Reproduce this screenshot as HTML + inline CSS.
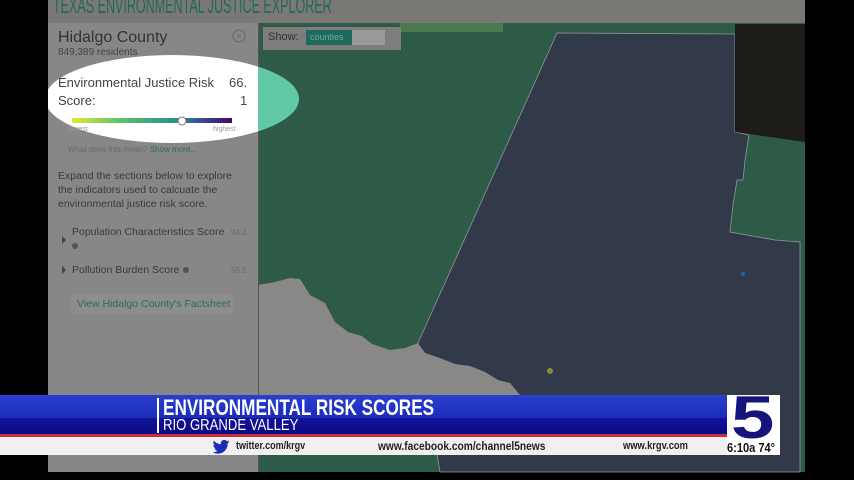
<!DOCTYPE html>
<html><head><meta charset="utf-8"><style>
*{margin:0;padding:0;box-sizing:border-box}
body{width:854px;height:480px;background:#000;position:relative;overflow:hidden;font-family:"Liberation Sans",sans-serif}
.abs{position:absolute}
.t{color:#3e3e3e;font-size:11px;white-space:nowrap}
</style></head><body>
<svg class="abs" style="left:0;top:0" width="854" height="480">
<rect x="48" y="0" width="757" height="472" fill="#2e5a48"/>
<rect x="48" y="0" width="757" height="23" fill="#7a7874"/>
<rect x="400" y="23" width="103" height="9" fill="#4c7a4e"/>
<polygon points="557,33 735,34 735,132 749,135 745,160 743,180 737,180 733,205 730,232 775,240 800,242 800,472 440,472 418,343" fill="#323a4a" stroke="#8c9a96" stroke-width="0.8"/>
<polygon points="735,24 805,24 805,142 735,132" fill="#1e1c18"/>
<polygon points="258,285 275,282 290,278 300,279 310,295 325,303 335,322 348,332 362,336 372,344 390,350 405,348 418,343 425,353 440,358 455,364 470,366 485,372 498,380 510,383 520,395 258,395" fill="#8a8886"/>
<rect x="48" y="23" width="210" height="449" fill="#878787"/>
<line x1="258.5" y1="23" x2="258.5" y2="472" stroke="#555" stroke-width="1"/>
<defs><clipPath id="cl"><rect x="48" y="0" width="210" height="480"/></clipPath><clipPath id="cr"><rect x="258" y="0" width="200" height="480"/></clipPath>
<linearGradient id="g" x1="0" x2="1"><stop offset="0" stop-color="#e4e73a"/><stop offset="0.3" stop-color="#5ec36a"/><stop offset="0.65" stop-color="#2a8f8a"/><stop offset="0.8" stop-color="#3a4f95"/><stop offset="1" stop-color="#440a68"/></linearGradient></defs>
<ellipse cx="172" cy="99" rx="127" ry="44" fill="#fff" clip-path="url(#cl)"/>
<ellipse cx="172" cy="99" rx="127" ry="44" fill="#62c9a6" clip-path="url(#cr)"/>
<rect x="72" y="118" width="160" height="5" fill="url(#g)"/>
<circle cx="182" cy="121" r="4" fill="#fff" stroke="#777"/>
<circle cx="239" cy="36" r="6" fill="none" stroke="#666" stroke-width="1"/>
<text x="239" y="39" font-size="9" fill="#666" text-anchor="middle">×</text>
<rect x="263" y="27" width="138" height="23" fill="#7d7d7d"/>
<rect x="306" y="30" width="46" height="15" fill="#1f6a5c"/>
<rect x="352" y="30" width="33" height="15" fill="#9a9a9a"/>
<circle cx="743" cy="274" r="2" fill="#2060b0"/>
<circle cx="550" cy="371" r="3" fill="#8c8a3a"/>
<path d="M62 236 l4 4 l-4 4z M62 266 l4 4 l-4 4z" fill="#444"/>
<circle cx="75" cy="246" r="3" fill="#555"/><circle cx="186" cy="270" r="3" fill="#555"/>
</svg>
<div class="abs" style="left:53px;top:-7px;font-size:22px;color:#1e6a5a;transform:scaleX(0.57);transform-origin:left;white-space:nowrap">TEXAS ENVIRONMENTAL JUSTICE EXPLORER</div>
<div class="abs t" style="left:58px;top:29px;font-size:16px;color:#333">Hidalgo County</div>
<div class="abs t" style="left:58px;top:47px;font-size:10px;color:#444">849,389 residents</div>
<div class="abs t" style="left:58px;top:75px;font-size:13px;color:#444">Environmental Justice Risk</div>
<div class="abs t" style="left:58px;top:93px;font-size:13px;color:#444">Score:</div>
<div class="abs t" style="left:229px;top:75px;font-size:13px;color:#444">66.</div>
<div class="abs t" style="left:240px;top:93px;font-size:13px;color:#444">1</div>
<div class="abs t" style="left:68px;top:126px;font-size:7px;color:#999">lowest</div>
<div class="abs t" style="left:213px;top:126px;font-size:7px;color:#999">highest</div>
<div class="abs t" style="left:68px;top:145px;font-size:8px;color:#6a6a6a">What does this mean? <span style="color:#2a6a60">Show more...</span></div>
<div class="abs t" style="left:58px;top:169px;font-size:10.5px;line-height:14px;color:#3a3a3a">Expand the sections below to explore<br>the indicators used to calcuate the<br>environmental justice risk score.</div>
<div class="abs t" style="left:72px;top:226px;font-size:10.5px;color:#3a3a3a">Population Characteristics Score</div>
<div class="abs t" style="left:231px;top:228px;font-size:8px;color:#6a6a6a">94.3</div>
<div class="abs t" style="left:72px;top:264px;font-size:10.5px;color:#3a3a3a">Pollution Burden Score</div>
<div class="abs t" style="left:231px;top:266px;font-size:8px;color:#6a6a6a">59.5</div>
<div class="abs" style="left:70px;top:294px;width:164px;height:20px;background:#8d8d8d"></div>
<div class="abs t" style="left:77px;top:298px;font-size:10.5px;color:#2c6a5e">View Hidalgo County's Factsheet</div>
<div class="abs t" style="left:268px;top:31px;font-size:11px;color:#333">Show:</div>
<div class="abs t" style="left:310px;top:32px;font-size:9px;color:#6aa">counties</div>
<!-- banner -->
<div class="abs" style="left:0;top:395px;width:727px;height:23px;background:linear-gradient(#2a3fd0,#1a2cb8)"></div>
<div class="abs" style="left:0;top:418px;width:727px;height:16px;background:linear-gradient(#12129a,#0c0c80)"></div>
<div class="abs" style="left:0;top:434px;width:727px;height:3px;background:#c83040"></div>
<div class="abs" style="left:0;top:437px;width:780px;height:18px;background:#f0f0f0"></div>
<div class="abs" style="left:157px;top:398px;width:2px;height:35px;background:#fff"></div>
<div class="abs" style="left:163px;top:395px;font-size:22px;font-weight:bold;color:#fff;transform:scaleX(0.78);transform-origin:left;white-space:nowrap">ENVIRONMENTAL RISK SCORES</div>
<div class="abs" style="left:163px;top:417px;font-size:16px;color:#fff;transform:scaleX(0.82);transform-origin:left;white-space:nowrap">RIO GRANDE VALLEY</div>
<svg class="abs" style="left:212px;top:440px" width="18" height="14" viewBox="0 0 24 20"><path d="M24 2.4a10 10 0 0 1-2.8.8A5 5 0 0 0 23.3.4a10 10 0 0 1-3.1 1.2A4.9 4.9 0 0 0 11.8 6 14 14 0 0 1 1.7.9a4.9 4.9 0 0 0 1.5 6.6A4.9 4.9 0 0 1 1 6.9a4.9 4.9 0 0 0 3.9 4.9 5 5 0 0 1-2.2.1 4.9 4.9 0 0 0 4.6 3.4A9.900 9.900 0 0 1 0 17.3 14 14 0 0 0 7.5 19.5c9.1 0 14-7.5 14-14v-.6A10 10 0 0 0 24 2.4z" fill="#1a2cb8"/></svg>
<div class="abs" style="left:236px;top:440px;font-size:11px;font-weight:bold;color:#222;transform:scaleX(0.82);transform-origin:left;white-space:nowrap">twitter.com/krgv</div>
<div class="abs" style="left:378px;top:439px;font-size:12px;font-weight:bold;color:#222;transform:scaleX(0.85);transform-origin:left;white-space:nowrap">www.facebook.com/channel5news</div>
<div class="abs" style="left:623px;top:440px;font-size:11px;font-weight:bold;color:#222;transform:scaleX(0.85);transform-origin:left;white-space:nowrap">www.krgv.com</div>
<div class="abs" style="left:727px;top:395px;width:53px;height:60px;background:#fff"></div>
<div class="abs" style="left:731px;top:388px;font-size:60px;font-weight:bold;color:#14147a;line-height:60px;transform:scaleX(1.3);transform-origin:left">5</div>
<div class="abs" style="left:727px;top:440px;font-size:13px;font-weight:bold;color:#111;transform:scaleX(0.85);transform-origin:left;white-space:nowrap">6:10a 74°</div>
</body></html>
